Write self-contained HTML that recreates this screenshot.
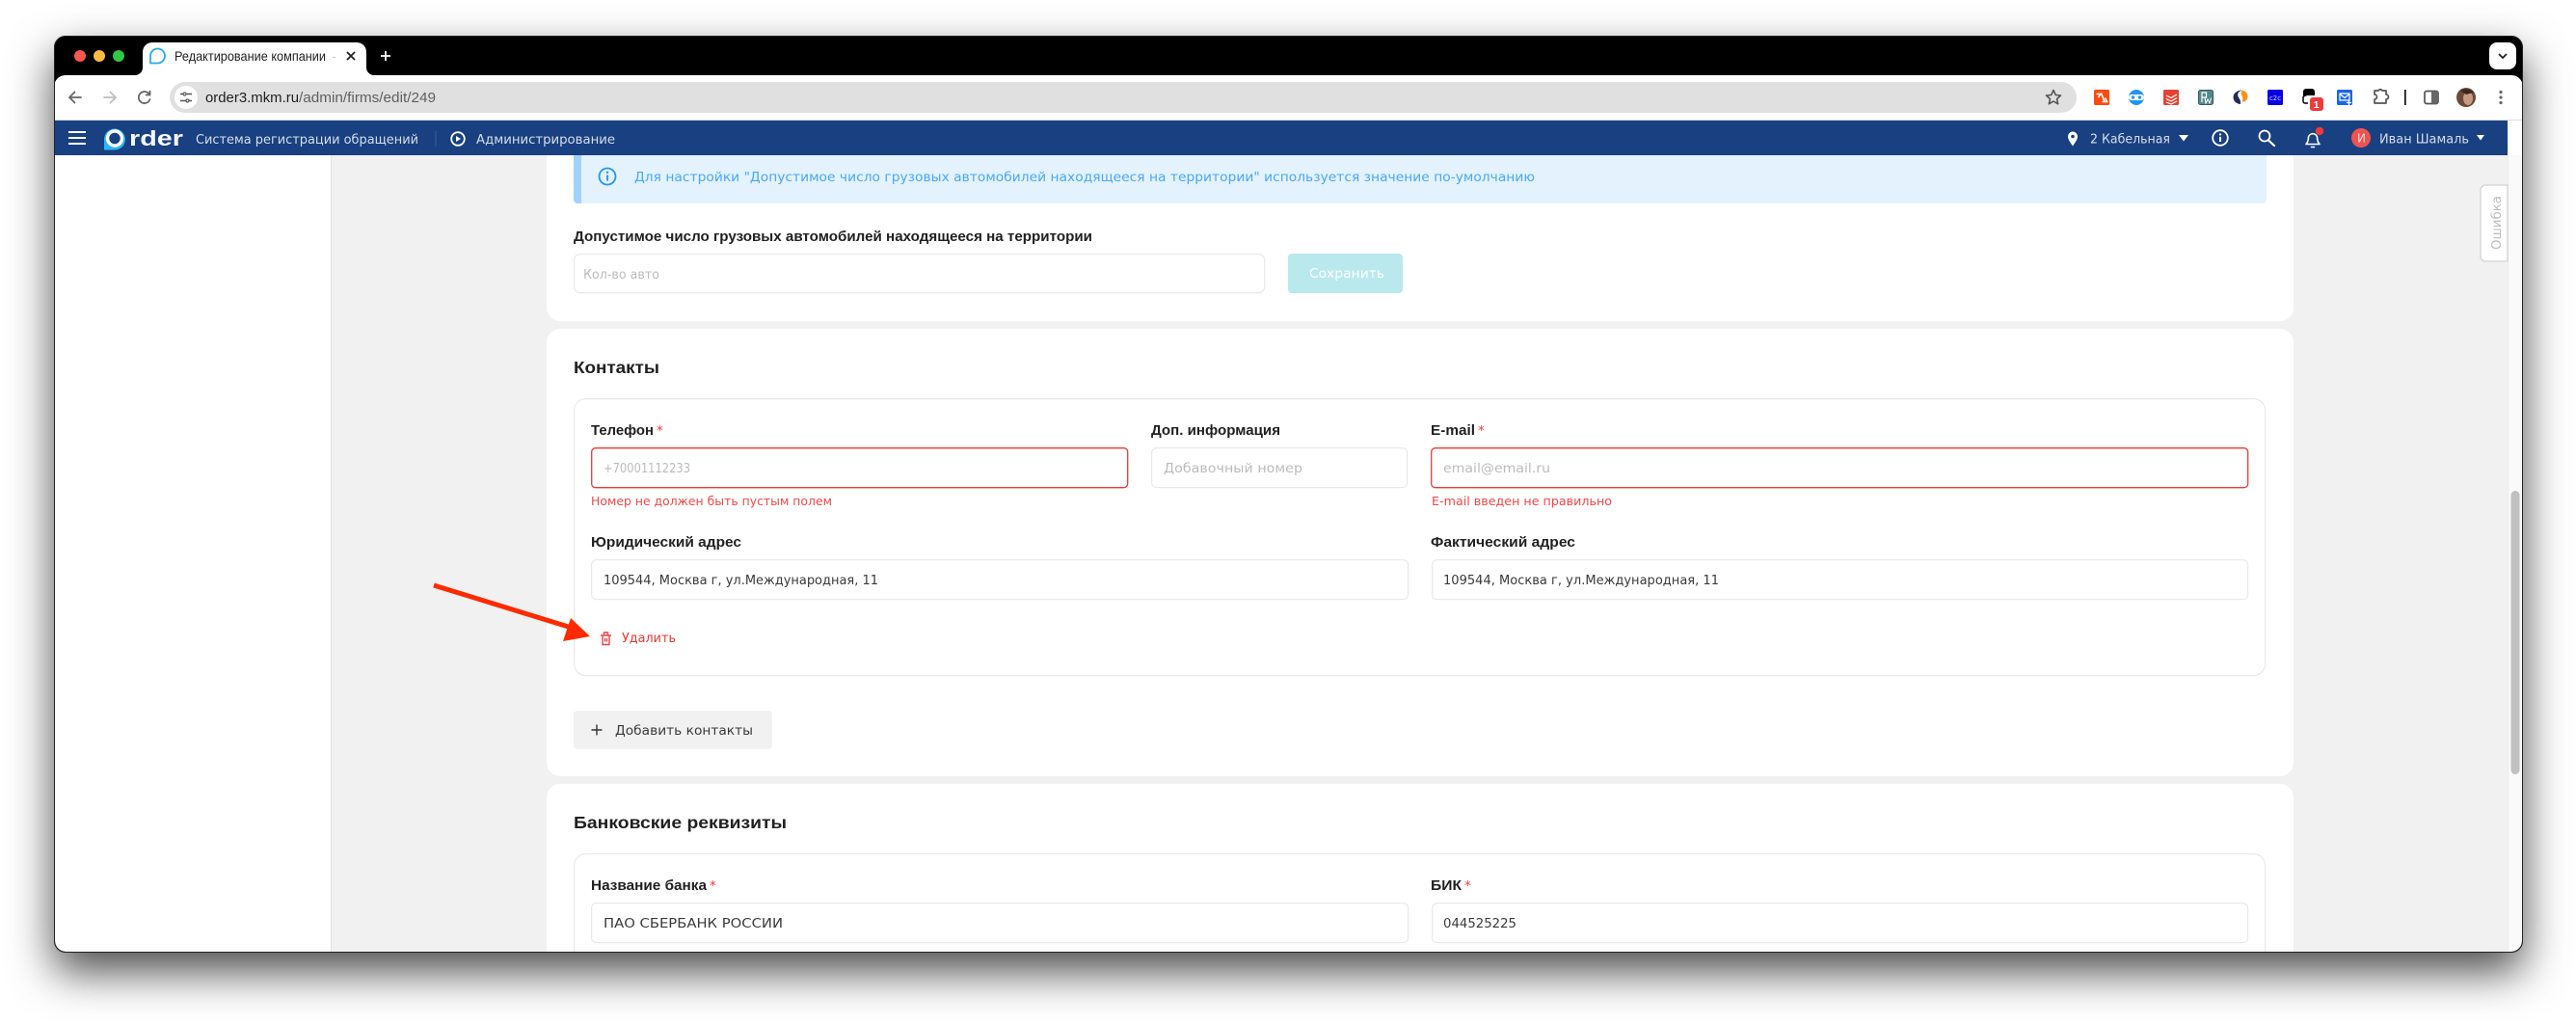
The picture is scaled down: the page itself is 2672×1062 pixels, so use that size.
<!DOCTYPE html>
<html lang="ru"><head><meta charset="utf-8"><title>Редактирование компании</title>
<style>
html,body{margin:0;padding:0;width:2672px;height:1062px;background:#fff;overflow:hidden}
#win{position:absolute;left:56px;top:37px;width:2561px;height:951px;border-radius:12px;box-shadow:0 20px 45px rgba(0,0,0,.7)}
svg{position:absolute;left:0;top:0}
text{font-family:"DejaVu Sans","Liberation Sans",sans-serif;font-size:13.5px;fill:#3a3a3a}
.b{font-weight:700;fill:#212121;font-family:"Liberation Sans","DejaVu Sans",sans-serif;font-size:15px}
.t{font-weight:700;fill:#212121;font-family:"Liberation Sans","DejaVu Sans",sans-serif;font-size:17.5px}
.p{fill:#bcbcbc}
.e{fill:#f0474a;font-size:12.5px}
.w{fill:#d5deec}
.c{font-family:"Liberation Sans",sans-serif;font-size:15px;fill:#222}
.s{fill:#e53935;font-size:13px}
.i{fill:#fff;stroke:#e9e9e9;stroke-width:1.2}
.r{fill:#fff;stroke:#ee3a36;stroke-width:1.3}
.n{fill:none;stroke:#666;stroke-width:1.8;stroke-linecap:round;stroke-linejoin:round}
.h{fill:none;stroke:#fff;stroke-width:1.8;stroke-linecap:round;stroke-linejoin:round}
</style></head><body>
<div id="win"></div>
<svg width="2672" height="1062" viewBox="0 0 2672 1062" xmlns="http://www.w3.org/2000/svg">
<defs><clipPath id="wc"><rect x="57" y="38" width="2559" height="949" rx="11"/></clipPath></defs>
<rect x="56" y="37" width="2561" height="951" rx="12" fill="#000"/>
<g clip-path="url(#wc)">
<!-- page -->
<rect x="56" y="124" width="2561" height="865" fill="#fff"/>
<rect x="344" y="161" width="2257" height="828" fill="#f1f1f1"/>
<rect x="343" y="161" width="1" height="828" fill="#e2e2e2"/>
<rect x="2601" y="161" width="16" height="828" fill="#fafafa"/>
<rect x="2601" y="161" width="1" height="828" fill="#ececec"/>
<rect x="2604.5" y="509" width="9" height="294" rx="4.5" fill="#c0c0c0"/>
<!-- cards -->
<rect x="567" y="140" width="1812" height="193" rx="14" fill="#fff"/>
<rect x="567" y="341" width="1812" height="464" rx="14" fill="#fff"/>
<rect x="567" y="813" width="1812" height="200" rx="14" fill="#fff"/>
<!-- notice -->
<path d="M595 161H2351V207a4 4 0 0 1-4 4H599a4 4 0 0 1-4-4Z" fill="#e3f2fd"/>
<path d="M595 161H603V211H599a4 4 0 0 1-4-4Z" fill="#a2d2fb"/>
<circle cx="630" cy="183" r="8.5" fill="none" stroke="#2196f3" stroke-width="1.8"/>
<rect x="629.1" y="181.5" width="1.9" height="6" fill="#2196f3"/><circle cx="630" cy="178.8" r="1.2" fill="#2196f3"/>
<text x="658" y="188" textLength="934" lengthAdjust="spacingAndGlyphs" style="fill:#4aa8f5">Для настройки "Допустимое число грузовых автомобилей находящееся на территории" используется значение по-умолчанию</text>
<text class="b" x="595" y="250" textLength="538" lengthAdjust="spacingAndGlyphs">Допустимое число грузовых автомобилей находящееся на территории</text>
<rect class="i" x="595.6" y="263.6" width="716" height="40" rx="6"/>
<text class="p" x="605" y="289" textLength="79" lengthAdjust="spacingAndGlyphs">Кол-во авто</text>
<rect x="1336" y="263" width="119" height="41" rx="4" fill="#b9e9ed"/>
<text x="1358" y="288" textLength="78" lengthAdjust="spacingAndGlyphs" style="fill:#fff">Сохранить</text>
<!-- contacts -->
<text class="t" x="595" y="387" textLength="89" lengthAdjust="spacingAndGlyphs">Контакты</text>
<rect x="595.6" y="413.6" width="1754" height="287" rx="12" fill="#fff" stroke="#e9e9e9" stroke-width="1.2"/>
<text class="b" x="613" y="451" textLength="65" lengthAdjust="spacingAndGlyphs">Телефон</text><text x="681" y="451" style="fill:#f03a36">*</text>
<rect class="r" x="613.7" y="464.7" width="556" height="41" rx="4"/>
<text class="p" x="626" y="490" textLength="90" lengthAdjust="spacingAndGlyphs">+70001112233</text>
<text class="e" x="613" y="524" textLength="250" lengthAdjust="spacingAndGlyphs">Номер не должен быть пустым полем</text>
<text class="b" x="1194" y="451" textLength="134" lengthAdjust="spacingAndGlyphs">Доп. информация</text>
<rect class="i" x="1194.6" y="464.6" width="265" height="41" rx="5"/>
<text class="p" x="1207" y="490" textLength="144" lengthAdjust="spacingAndGlyphs">Добавочный номер</text>
<text class="b" x="1484" y="451" textLength="46" lengthAdjust="spacingAndGlyphs">E-mail</text><text x="1533" y="451" style="fill:#f03a36">*</text>
<rect class="r" x="1484.7" y="464.7" width="847" height="41" rx="4"/>
<text class="p" x="1497" y="490" textLength="111" lengthAdjust="spacingAndGlyphs">email@email.ru</text>
<text class="e" x="1485" y="524" textLength="187" lengthAdjust="spacingAndGlyphs">E-mail введен не правильно</text>
<text class="b" x="613" y="567" textLength="156" lengthAdjust="spacingAndGlyphs">Юридический адрес</text>
<rect class="i" x="613.6" y="580.6" width="847" height="41" rx="5"/>
<text x="626" y="606" textLength="285" lengthAdjust="spacingAndGlyphs">109544, Москва г, ул.Международная, 11</text>
<text class="b" x="1484" y="567" textLength="150" lengthAdjust="spacingAndGlyphs">Фактический адрес</text>
<rect class="i" x="1485.6" y="580.6" width="846" height="41" rx="5"/>
<text x="1497" y="606" textLength="286" lengthAdjust="spacingAndGlyphs">109544, Москва г, ул.Международная, 11</text>
<path d="M623 659H634M625 659V668.500H632V659M626.500 659V656H630.500V659M627.500 662V665.500M629.500 662V665.500" fill="none" stroke="#ee4444" stroke-width="1.400"/>
<text class="s" x="645" y="666" textLength="56" lengthAdjust="spacingAndGlyphs">Удалить</text>
<rect x="595" y="737" width="206" height="40" rx="4" fill="#f1f1f1"/>
<path d="M619 751.500V762.500M613.500 757H624.500" stroke="#333" stroke-width="1.400"/>
<text x="638" y="762" textLength="143" lengthAdjust="spacingAndGlyphs">Добавить контакты</text>
<!-- bank -->
<text class="t" x="595" y="859" textLength="221" lengthAdjust="spacingAndGlyphs">Банковские реквизиты</text>
<rect x="595.6" y="885.6" width="1754" height="160" rx="12" fill="#fff" stroke="#e9e9e9" stroke-width="1.200"/>
<text class="b" x="613" y="923" textLength="120" lengthAdjust="spacingAndGlyphs">Название банка</text><text x="736" y="923" style="fill:#f03a36">*</text>
<rect class="i" x="613.6" y="936.6" width="847" height="41" rx="5"/>
<text x="626" y="962" textLength="186" lengthAdjust="spacingAndGlyphs">ПАО СБЕРБАНК РОССИИ</text>
<text class="b" x="1484" y="923" textLength="32" lengthAdjust="spacingAndGlyphs">БИК</text><text x="1519" y="923" style="fill:#f03a36">*</text>
<rect class="i" x="1485.6" y="936.6" width="846" height="41" rx="5"/>
<text x="1497" y="962" textLength="76" lengthAdjust="spacingAndGlyphs">044525225</text>
<!-- error tab -->
<path d="M2601 192H2578a5 5 0 0 0-5 5V266a5 5 0 0 0 5 5H2601Z" fill="#fff" stroke="#d8d8d8" stroke-width="1.500"/>
<text transform="translate(2594 259) rotate(-90)" textLength="56" lengthAdjust="spacingAndGlyphs" style="fill:#bdbdbd;font-size:13.500px">Ошибка</text>
<!-- app header -->
<rect x="56" y="125" width="2545" height="36" fill="#194080"/>
<path d="M71 137H89M71 143H89M71 149H89" stroke="#fff" stroke-width="2"/>
<path d="M108 144a11 11 0 1 1 11 11.500H108Z" fill="#29b6f6"/>
<circle cx="119" cy="143.500" r="7.500" fill="#194080" stroke="#fff" stroke-width="3.500"/>
<text x="134" y="151" textLength="56" lengthAdjust="spacingAndGlyphs" style="fill:#f4f7fb;font-weight:700;font-size:22px;font-family:'Liberation Sans',sans-serif">rder</text>
<text class="w" x="203" y="149" textLength="231" lengthAdjust="spacingAndGlyphs">Система регистрации обращений</text>
<rect x="451.500" y="136" width="1" height="16" fill="#3d5f97"/>
<circle cx="475" cy="144" r="6.800" class="h"/><path d="M473 141V147L478 144Z" fill="#fff"/>
<text class="w" x="494" y="149" textLength="144" lengthAdjust="spacingAndGlyphs">Администрирование</text>
<path d="M2150 151.500C2147 147 2145 144.500 2145 141.500a5 5 0 0 1 10 0C2155 144.500 2153 147 2150 151.500Z" fill="#fff"/><circle cx="2150" cy="141.500" r="1.800" fill="#194080"/>
<text class="w" x="2168" y="148.500" textLength="83" lengthAdjust="spacingAndGlyphs">2 Кабельная</text>
<path d="M2260 140H2270L2265 146.500Z" fill="#fff"/>
<circle cx="2303" cy="143" r="7.800" class="h"/><rect x="2302" y="141.800" width="2" height="5.200" fill="#fff"/><circle cx="2303" cy="139.400" r="1.200" fill="#fff"/>
<circle cx="2349" cy="141" r="5.500" class="h"/><path d="M2353 145.500L2359 151" class="h" style="stroke-width:2.200"/>
<path d="M2392 149.500C2394 147.500 2394.500 145 2394.500 142A4.700 4.700 0 0 1 2403.500 142C2403.500 145 2404 147.500 2406 149.500ZM2397.500 152.500H2400.500" class="h" style="stroke-width:1.600"/>
<circle cx="2406" cy="136" r="4.200" fill="#f03a36"/>
<circle cx="2449" cy="143" r="10" fill="#ef5350"/>
<text x="2445" y="147.500" style="fill:#f5dada;font-size:12px">И</text>
<text class="w" x="2468" y="148.500" textLength="93" lengthAdjust="spacingAndGlyphs">Иван Шамаль</text>
<path d="M2569 140H2577L2573 145.500Z" fill="#fff"/>
<!-- toolbar -->
<rect x="56" y="44" width="2561" height="34" fill="#000"/>
<rect x="56" y="78" width="2561" height="47" rx="0" fill="#fff"/>
<path d="M56 78H68A12 12 0 0 0 56 90Z" fill="#000"/><path d="M2617 78H2605A12 12 0 0 1 2617 90Z" fill="#000"/>
<rect x="56" y="124" width="2561" height="1" fill="#dcdcdc"/>
<rect x="176" y="85" width="1978" height="32" rx="16" fill="#e0e0e0"/>
<circle cx="193" cy="101" r="12" fill="#fff"/>
<path d="M187 97.500H190M193.500 97.500H199M187 104.500H192.500M196 104.500H199" stroke="#555" stroke-width="1.500"/><circle cx="191.500" cy="97.500" r="1.500" fill="none" stroke="#555" stroke-width="1.200"/><circle cx="194.500" cy="104.500" r="1.500" fill="none" stroke="#555" stroke-width="1.200"/>
<text class="c" x="213" y="106" textLength="97" lengthAdjust="spacingAndGlyphs" style="fill:#1f1f1f">order3.mkm.ru</text>
<text class="c" x="310" y="106" textLength="142" lengthAdjust="spacingAndGlyphs" style="fill:#5f5f5f">/admin/firms/edit/249</text>
<path d="M84 101H72M77.500 95.500L72 101L77.500 106.500" class="n"/>
<path d="M108 101H120M114.500 95.500L120 101L114.500 106.500" class="n" style="stroke:#bdbdbd"/>
<path d="M155.500 103A6 6 0 1 1 155 98M155.500 94.500V98.500H151.500" class="n"/>
<path d="M2130 93.500L2132.300 98.500L2137.500 99L2133.500 102.600L2134.700 107.800L2130 105L2125.300 107.800L2126.500 102.600L2122.500 99L2127.700 98.500Z" fill="none" stroke="#555" stroke-width="1.600" stroke-linejoin="round"/>
<!-- ext icons -->
<rect x="2172" y="93" width="16" height="16" rx="1.500" fill="#ff4a11"/><path d="M2174.500 97.500H2179L2176.500 101M2179.500 96.500L2183 105.500M2180.500 105.500H2185.500L2183.500 101.500" fill="none" stroke="#fff" stroke-width="1.600"/>
<circle cx="2216" cy="101" r="8" fill="#2196f3"/><rect x="2208" y="98" width="16" height="6" rx="3" fill="#fff"/><circle cx="2212.500" cy="101" r="1.700" fill="#2196f3"/><circle cx="2219.500" cy="101" r="1.700" fill="#2196f3"/>
<rect x="2244" y="93" width="16" height="16" rx="1.500" fill="#e44332"/><path d="M2247 99L2252 101.500L2258 98M2247 102.500L2252 105L2258 101.500M2247 106L2252 108L2258 105" fill="none" stroke="#fff" stroke-width="1.200"/>
<rect x="2280.500" y="93.500" width="15" height="15" rx="2" fill="#568a8a" stroke="#2f5d5d"/><path d="M2284 106V96H2288.500V101H2284" fill="none" stroke="#fff" stroke-width="1.200"/><path d="M2287 101.500L2288 107L2290 103L2292 107L2293.500 101.500" fill="none" stroke="#fff" stroke-width="1"/>
<path d="M2326 93.500C2322 94.500 2320.500 97 2321.500 100C2322.500 102.500 2324.500 103 2324 108C2321 108 2316.500 105.500 2316.500 101C2316.500 97 2320 93.500 2326 93.500Z" fill="#1f2d5c"/><path d="M2326 93.500C2330 94.500 2332 97.500 2331.500 101C2331 104 2328 106 2325.500 105.500C2326.500 103 2326.500 101 2325 98.500C2324 96.500 2324.500 95 2326 93.500Z" fill="#f7941d"/>
<rect x="2352" y="93" width="16" height="16" rx="1.500" fill="#0a00e6"/><text x="2354" y="104" textLength="12" lengthAdjust="spacingAndGlyphs" style="fill:#cfd0ff;font-size:7px">c2c</text>
<path d="M2389 95a3 3 0 0 1 3-3h6a3 3 0 0 1 3 3v4h-8l-4 2Z" fill="#000"/><path d="M2389 100v5a2 2 0 0 0 2 2h3" fill="none" stroke="#000" stroke-width="1.500"/>
<rect x="2396" y="101" width="14" height="14" rx="3" fill="#ef3b3b"/><text x="2399.800" y="112" style="fill:#fff;font-size:10.500px;font-weight:700;font-family:'Liberation Sans',sans-serif">1</text>
<rect x="2424" y="93" width="16" height="16" rx="1.500" fill="#1a66e8"/><path d="M2427 97H2437V104H2427ZM2427 97.500L2432 101.500L2437 97.500M2434 106.500H2439M2436.500 104V109" fill="none" stroke="#fff" stroke-width="1.200"/>
<path d="M2462 95H2466a2.200 2.200 0 0 1 4 0H2474V99a2.500 2.500 0 0 1 0 5V108H2462V104a2.500 2.500 0 0 0 0-5Z" fill="none" stroke="#555" stroke-width="1.700" stroke-linejoin="round" transform="translate(1 -1)"/>
<rect x="2494" y="93" width="1.700" height="16" fill="#111"/>
<rect x="2515" y="94.500" width="14" height="13" rx="2" fill="none" stroke="#555" stroke-width="1.700"/><rect x="2522" y="94.500" width="7" height="13" fill="#666"/>
<circle cx="2558" cy="101" r="10" fill="#6a4a38"/><ellipse cx="2560" cy="102" rx="5" ry="7" fill="#c79b82"/><path d="M2552 94Q2560 90 2566 96L2558 98Z" fill="#3a2a20"/>
<circle cx="2594" cy="95.500" r="1.600" fill="#666"/><circle cx="2594" cy="101" r="1.600" fill="#666"/><circle cx="2594" cy="106.500" r="1.600" fill="#666"/>
<!-- tab bar -->
<path d="M140 78A8 8 0 0 0 148 70V54A10 10 0 0 1 158 44H370A10 10 0 0 1 380 54V70A8 8 0 0 0 388 78Z" fill="#fff"/>
<circle cx="83" cy="58" r="6" fill="#fc5753"/><circle cx="103" cy="58" r="6" fill="#fdbc40"/><circle cx="123" cy="58" r="6" fill="#33c748"/>
<path d="M156 65.500V58A7.500 7.500 0 1 1 163.500 65.500Z" fill="none" stroke="#29a9f0" stroke-width="1.800" stroke-linejoin="round"/>
<text class="c" x="181" y="63" textLength="157" lengthAdjust="spacingAndGlyphs" style="font-size:14px;fill:#1f1f1f">Редактирование компании</text>
<text x="344" y="63" style="font-size:13px;fill:#c9c9c9">-</text>
<path d="M360 54L368 62M368 54L360 62" stroke="#222" stroke-width="1.800"/>
<path d="M400 53V63M395 58H405" stroke="#fff" stroke-width="1.800"/>
<rect x="2582" y="44" width="28" height="28" rx="8" fill="#fff"/>
<path d="M2592 56L2596 60L2600 56" fill="none" stroke="#222" stroke-width="1.800"/>
</g>
<rect x="56.500" y="37.500" width="2560" height="950" rx="12" fill="none" stroke="#222" stroke-width="1"/>
<!-- arrow -->
<path d="M450 607L596 652" stroke="#ff2a00" stroke-width="5"/>
<path d="M592 641L612 660L584 665Z" fill="#ff2a00"/>
</svg>
</body></html>
